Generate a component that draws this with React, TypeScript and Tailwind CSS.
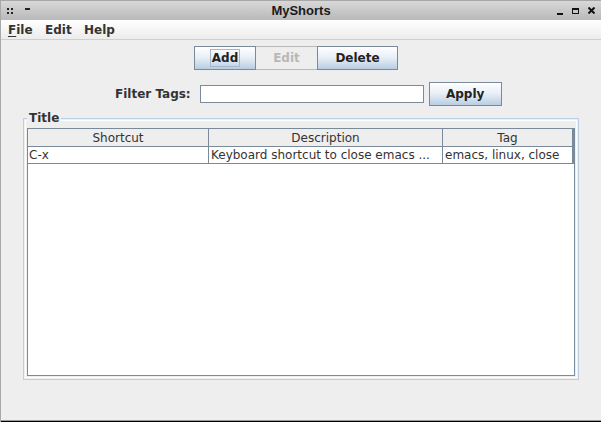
import React from "react";

const btn =
  "h-[24px] border border-[#7a8a99] bg-gradient-to-b from-[#ffffff] via-[#e6eef6] to-[#b9cde2] text-[12px] font-bold text-[#222] flex items-center justify-center";

export default function App() {
  return (
    <div
      className="w-[601px] h-[422px] bg-[#eeeeee] flex flex-col border-l border-[#a9a9a9] overflow-hidden relative"
      style={{ fontFamily: '"DejaVu Sans", sans-serif' }}
    >
      {/* title bar */}
      <div className="h-[20px] shrink-0 border-t border-[#a6a6a6] bg-gradient-to-b from-[#d8d8d8] to-[#b9b9b9] flex items-center relative">
        <div className="ml-[6px] grid grid-cols-2 gap-[2px] w-[6px]">
          <span className="w-[2px] h-[2px] bg-[#222]" />
          <span className="w-[2px] h-[2px] bg-[#222]" />
          <span className="w-[2px] h-[2px] bg-[#222]" />
          <span className="w-[2px] h-[2px] bg-[#222]" />
        </div>
        <span className="ml-[12px] w-[5px] h-[2px] bg-[#222] -mt-[3px]" />
        <div
          className="absolute left-0 right-0 top-0 bottom-0 flex items-center justify-center text-[13px] font-bold text-[#1a1a1a]"
          style={{ fontFamily: '"Liberation Sans", Arial, sans-serif' }}
        >
          MyShorts
        </div>
        <div className="ml-auto flex items-center gap-[9px] mr-[6px]">
          <span className="w-[6px] h-[2px] bg-[#111] mt-[6px]" />
          <span className="w-[7px] h-[6px] border border-[#111] border-t-2" />
          <svg width="7" height="7" viewBox="0 0 7 7">
            <path d="M0.5 0.5 L6.5 6.5 M6.5 0.5 L0.5 6.5" stroke="#111" strokeWidth="2" />
          </svg>
        </div>
      </div>

      {/* menu bar */}
      <div className="h-[20px] shrink-0 bg-gradient-to-b from-[#ffffff] to-[#ececec] border-b border-[#cfcfcf] flex items-center text-[12px] font-bold text-[#333]">
        <span className="ml-[7px] w-[37px]">
          <span className="underline underline-offset-2">F</span>ile
        </span>
        <span className="w-[39px]">Edit</span>
        <span>Help</span>
      </div>

      {/* buttons */}
      <div className="flex mt-[6px] pl-[193px]">
        <div className={`${btn} w-[62px]`}>
          <span className="border border-[#a3b8cc] px-[1px] leading-[16px]">Add</span>
        </div>
        <div className="h-[24px] w-[61px] border-y border-[#b8b8b8] bg-[#eeeeee] text-[12px] font-bold text-[#b8b8b8] flex items-center justify-center">
          Edit
        </div>
        <div className={`${btn} w-[81px]`}>Delete</div>
      </div>

      {/* filter row */}
      <div className="flex items-center mt-[12px] pl-[114px]">
        <span className="text-[12px] font-bold text-[#333]">Filter Tags:</span>
        <div className="ml-[9px] w-[224px] h-[18px] bg-white border border-[#7a8a99]" />
        <div className={`${btn} ml-[5px] w-[73px] !h-[24px]`}>Apply</div>
      </div>

      {/* titled panel */}
      <div className="relative mx-[22px] mt-[12px] h-[262px] border border-[#b8cfe5] p-[1px]">
        <span className="absolute -top-[9px] left-[3px] px-[2px] bg-[#eeeeee] text-[12px] font-bold text-[#333] leading-[16px]">
          Title
        </span>
        <div className="w-full h-full border border-white pt-[7px] pl-[1px] pr-[1px] pb-[1px]">
          <div className="w-full h-full bg-white border border-[#7a8a99] flex flex-col text-[12px] text-[#333]">
            <div className="flex h-[18px] bg-[#eeeeee] border-b border-[#7a8a99]">
              <div className="w-[181px] border-r border-[#7a8a99] flex items-center justify-center">Shortcut</div>
              <div className="w-[234px] border-r border-[#7a8a99] flex items-center justify-center">Description</div>
              <div className="flex-1 border-r-2 border-[#7a8a99] flex items-center justify-center">Tag</div>
            </div>
            <div className="flex h-[17px] border-b border-[#7a8a99]">
              <div className="w-[181px] border-r border-[#7a8a99] flex items-center pl-[1px] whitespace-nowrap overflow-hidden">C-x</div>
              <div className="w-[234px] border-r border-[#7a8a99] flex items-center pl-[2px] whitespace-nowrap overflow-hidden">Keyboard shortcut to close emacs ...</div>
              <div className="flex-1 border-r-2 border-[#7a8a99] flex items-center pl-[2px] whitespace-nowrap overflow-hidden">emacs, linux, close</div>
            </div>
          </div>
        </div>
      </div>

      <div className="absolute left-0 right-0 bottom-0 h-[2px] bg-[#9a9a9a] border-b border-black" />
    </div>
  );
}
